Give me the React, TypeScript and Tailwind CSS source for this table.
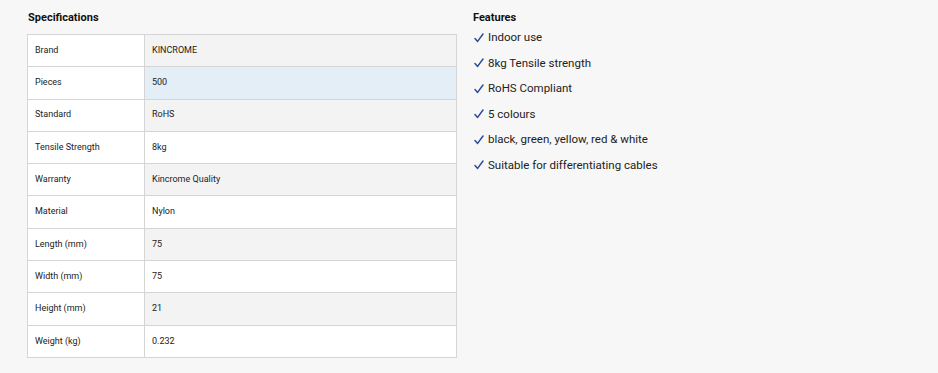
const specs: [string, string][] = [
  ["Brand", "KINCROME"],
  ["Pieces", "500"],
  ["Standard", "RoHS"],
  ["Tensile Strength", "8kg"],
  ["Warranty", "Kincrome Quality"],
  ["Material", "Nylon"],
  ["Length (mm)", "75"],
  ["Width (mm)", "75"],
  ["Height (mm)", "21"],
  ["Weight (kg)", "0.232"],
];

const features = [
  "Indoor use",
  "8kg Tensile strength",
  "RoHS Compliant",
  "5 colours",
  "black, green, yellow, red & white",
  "Suitable for differentiating cables",
];

export default function App() {
  return (
    <div className="w-[938px] h-[373px] bg-[#f7f7f7] font-['Roboto',sans-serif] text-[#222] flex pl-[27px] pt-[11px]">
      {/* 规格表 */}
      <div className="w-[430px]">
        <h3 className="text-[11px] font-bold leading-[14px] pl-px mb-[9px] text-[#111]">Specifications</h3>
        <table className="w-full border-collapse text-[9px]">
          <tbody>
            {specs.map(([label, value], i) => {
              let valueBg = i % 2 === 0 ? "bg-[#f3f3f3]" : "bg-white";
              if (label === "Pieces") valueBg = "bg-[#e3eef6]";
              return (
                <tr key={label} className="h-[32.3px]">
                  <td className="w-[117px] border border-[#d5d5d5] bg-white px-[7px]">{label}</td>
                  <td className={`border border-[#d5d5d5] px-[7px] ${valueBg}`}>{value}</td>
                </tr>
              );
            })}
          </tbody>
        </table>
      </div>

      {/* 特点 */}
      <div className="ml-[16px] pt-[1px]">
        <h3 className="text-[11px] font-bold leading-[12px] mb-[6px] text-[#111]">Features</h3>
        <ul className="flex flex-col gap-[10px]">
          {features.map((f) => (
            <li key={f} className="flex items-center text-[11.5px] leading-[15.5px] text-[#222]">
              <svg className="w-[10px] h-[10px] ml-[1px] mr-[4px]" viewBox="0 0 10 10" fill="none">
                <path d="M1 5.6 L3.6 8.4 L9 1" stroke="#2a4f96" strokeWidth="1.5" strokeLinecap="round" strokeLinejoin="round" />
              </svg>
              {f}
            </li>
          ))}
        </ul>
      </div>
    </div>
  );
}
